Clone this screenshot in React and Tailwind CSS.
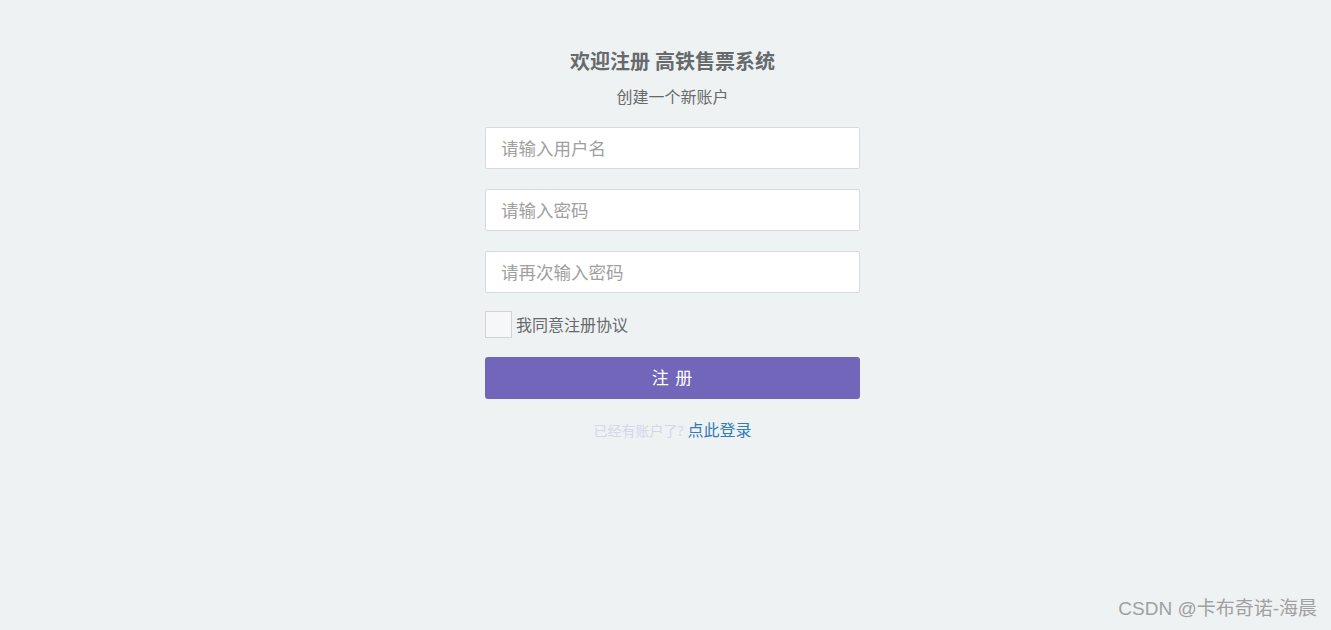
import React from 'react';

const font = { fontFamily: '"Open Sans", "Noto Sans CJK SC", sans-serif' };

const Field = ({ placeholder, type = 'text' }) => (
  <input
    type={type}
    placeholder={placeholder}
    className="w-full h-[42px] px-[15px] bg-white border border-[#d5dbde] rounded-[2px] text-[17.5px] text-[#676a6c] placeholder:text-[#a0a0a0] outline-none"
  />
);

const App = () => {
  return (
    <div
      className="w-full h-[630px] bg-[#eef2f3] text-[#676a6c] flex flex-col items-center relative pl-[14px]"
      style={font}
    >
      <div className="w-[375px] mt-[46px] flex flex-col">
        <h3 className="text-center text-[20px] font-bold leading-[32px]">欢迎注册 高铁售票系统</h3>
        <p className="text-center text-[16px] leading-[22px] mt-[8px]">创建一个新账户</p>

        <form className="mt-[19px] flex flex-col gap-[20px]" onSubmit={(e) => e.preventDefault()}>
          <Field placeholder="请输入用户名" />
          <Field placeholder="请输入密码" type="password" />
          <Field placeholder="请再次输入密码" type="password" />
        </form>

        <label className="mt-[18px] flex items-center gap-[4px] text-[16px] h-[27px]">
          <span className="w-[27px] h-[27px] bg-white/40 border border-[#d3d3d3] block" />
          <span>我同意注册协议</span>
        </label>

        <button className="mt-[19px] h-[42px] w-full bg-[#7266ba] rounded-[3px] text-white text-[17px] tracking-[1px]">
          注 册
        </button>

        <p className="mt-[20px] text-center leading-[22px]">
          <span className="text-[14px] text-[#d6d5ea]">已经有账户了?</span>{' '}
          <a className="text-[16px] text-[#337ab7]">点此登录</a>
        </p>
      </div>

      <div
        className="absolute right-[14px] bottom-[7px] text-[19px] text-[#a0a0a0]"
        style={{ fontFamily: '"Liberation Sans", "Noto Sans CJK SC", sans-serif' }}
      >
        CSDN @卡布奇诺-海晨
      </div>
    </div>
  );
};

export default App;
